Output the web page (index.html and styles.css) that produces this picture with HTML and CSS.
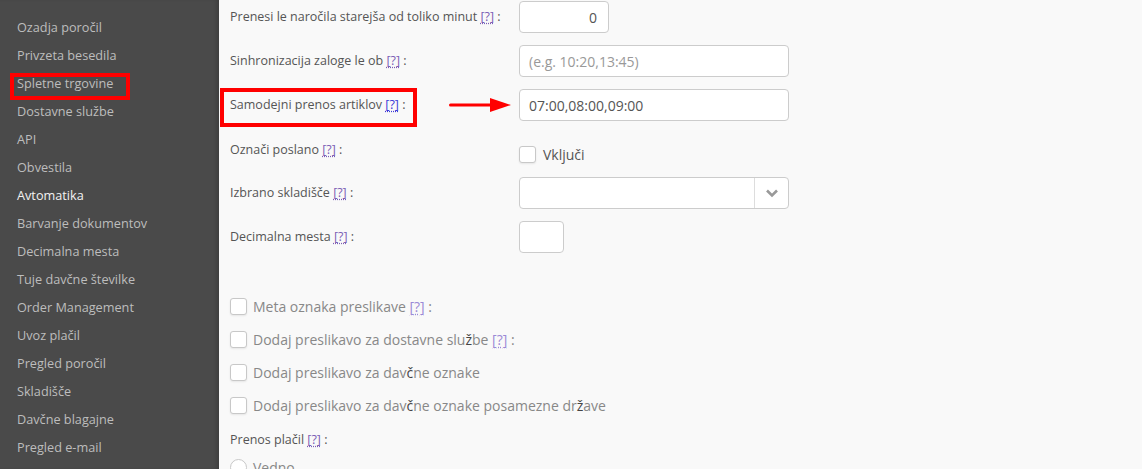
FILE: index.html
```html
<!DOCTYPE html>
<html>
<head>
<meta charset="utf-8">
<link rel="stylesheet" href="styles.css">
</head>
<body>
<div class="page">
  <nav class="sidebar">
    <ul class="menu">
      <li>Ozadja poročil</li>
      <li>Privzeta besedila</li>
      <li class="marked">Spletne trgovine<span class="mark mark-side"></span></li>
      <li>Dostavne službe</li>
      <li>API</li>
      <li>Obvestila</li>
      <li class="active">Avtomatika</li>
      <li>Barvanje dokumentov</li>
      <li>Decimalna mesta</li>
      <li>Tuje davčne številke</li>
      <li>Order Management</li>
      <li>Uvoz plačil</li>
      <li>Pregled poročil</li>
      <li>Skladišče</li>
      <li>Davčne blagajne</li>
      <li>Pregled e-mail</li>
    </ul>
  </nav>
  <main class="content">
    <div class="form">
      <div class="row">
        <div class="label">Prenesi le naročila starejša od toliko minut <a class="help">[?]</a> :</div>
        <div class="field"><input class="input input-num" type="text" value="0"></div>
      </div>
      <div class="row">
        <div class="label">Sinhronizacija zaloge le ob <a class="help">[?]</a> :</div>
        <div class="field"><input class="input input-wide" type="text" placeholder="(e.g. 10:20,13:45)"></div>
      </div>
      <div class="row">
        <div class="label marked">Samodejni prenos artiklov <a class="help help-blue">[?]</a> :<span class="mark mark-label"></span>
          <svg class="arrow" width="64" height="16" viewBox="0 0 64 16"><rect x="0" y="6.5" width="44" height="3" rx="1.5" fill="#f00"/><polygon points="41,1 62,8 41,15" fill="#f00"/></svg>
        </div>
        <div class="field"><input class="input input-wide" type="text" value="07:00,08:00,09:00"></div>
      </div>
      <div class="row">
        <div class="label label-top">Označi poslano <a class="help">[?]</a> :</div>
        <div class="field field-check"><span class="checkbox"></span><span class="check-text">Vključi</span></div>
      </div>
      <div class="row">
        <div class="label">Izbrano skladišče <a class="help">[?]</a> :</div>
        <div class="field">
          <div class="select">
            <span class="select-value"></span>
            <span class="select-arrow"><svg width="14" height="10" viewBox="0 0 14 10"><path d="M2 2.5 L7 7.5 L12 2.5" fill="none" stroke="#999" stroke-width="2.6"/></svg></span>
          </div>
        </div>
      </div>
      <div class="row">
        <div class="label">Decimalna mesta <a class="help">[?]</a> :</div>
        <div class="field"><input class="input input-small" type="text"></div>
      </div>
    </div>
    <div class="checks">
      <div class="check-row"><span class="checkbox"></span><span class="check-label">Meta oznaka preslikave <a class="help help-light">[?]</a> :</span></div>
      <div class="check-row"><span class="checkbox"></span><span class="check-label">Dodaj preslikavo za dostavne slu<b class="dark">ž</b>be <a class="help help-light">[?]</a> :</span></div>
      <div class="check-row"><span class="checkbox"></span><span class="check-label">Dodaj preslikavo za dav<b class="dark">č</b>ne oznake</span></div>
      <div class="check-row"><span class="checkbox"></span><span class="check-label">Dodaj preslikavo za dav<b class="dark">č</b>ne oznake posamezne dr<b class="dark">ž</b>ave</span></div>
    </div>
    <div class="section-label">Prenos plačil <a class="help">[?]</a> :</div>
    <div class="radio-row"><span class="radio"></span><span class="check-label">Vedno</span></div>
  </main>
</div>
</body>
</html>
```
FILE: styles.css
```css
* { box-sizing: border-box; }
html, body { margin: 0; padding: 0; height: 100%; overflow: hidden; }
body {
  font-family: "Open Sans", "Noto Sans", sans-serif;
  background: #f9f9f9;
  color: #555;
}
.page { display: flex; height: 469px; }
.sidebar {
  width: 219px;
  flex: none;
  background: #4a4a4a;
  box-shadow: inset -4px 0 4px -2px rgba(0,0,0,0.18);
}
.menu {
  list-style: none;
  margin: 0;
  padding: 13px 0 0 17px;
}
.menu li {
  height: 28px;
  line-height: 28px;
  font-size: 12.7px;
  color: #bdbdbd;
  position: relative;
  white-space: nowrap;
}
.menu li.active { color: #f2f2f2; }
.marked { position: relative; }
.mark {
  position: absolute;
  border: 4px solid #f00;
  pointer-events: none;
}
.mark-side { left: -7px; top: 4px; width: 120px; height: 27px; }
.mark-label { left: -10px; top: -1px; width: 197px; height: 39px; }
.arrow { position: absolute; left: 219px; top: 8px; }

.content {
  flex: 1;
  padding: 1px 0 0 11px;
  position: relative;
}
.form { display: flex; flex-direction: column; gap: 12px; }
.row { display: flex; height: 32px; }
.label {
  width: 289px;
  flex: none;
  font-size: 12.5px;
  line-height: 32px;
  color: #555;
  white-space: nowrap;
}
.label-top { line-height: 18px; padding-top: 8px; }
.help {
  color: #7b5fb5;
  text-decoration: underline dotted;
  text-underline-offset: 2px;
}
.help-blue { color: #3a3ad8; }
.help-light { color: #9b8ad6; }
.field { display: flex; align-items: center; }
.input {
  height: 32px;
  border: 1px solid #ccc;
  border-radius: 4px;
  background: #fff;
  font-family: "Open Sans", "Noto Sans", sans-serif;
  font-size: 14px;
  color: #555;
  padding: 0 9px;
  outline: none;
}
.input::placeholder { color: #999; }
.input-num { width: 90px; text-align: right; padding-right: 11px; }
.input-wide { width: 270px; }
.input-small { width: 45px; }
.field-check { align-items: flex-start; padding-top: 13px; gap: 7px; }
.checkbox {
  display: inline-block;
  width: 17px;
  height: 17px;
  flex: none;
  border: 1px solid #c8c8c8;
  border-radius: 3px;
  background: #fff;
  box-shadow: 0 1px 2px rgba(0,0,0,0.08);
}
.check-text { font-size: 14px; line-height: 17px; color: #555; }
.select {
  width: 270px;
  height: 32px;
  border: 1px solid #ccc;
  border-radius: 4px;
  background: #fff;
  display: flex;
}
.select-value { flex: 1; }
.select-arrow {
  width: 34px;
  border-left: 1px solid #ddd;
  display: flex;
  align-items: center;
  justify-content: center;
}
.checks {
  margin-top: 45px;
  display: flex;
  flex-direction: column;
  gap: 16px;
}
.check-row { display: flex; align-items: center; gap: 6px; height: 17px; }
.check-label { font-size: 14px; color: #888; white-space: nowrap; }
.dark { font-weight: normal; color: #444; }
.section-label { font-size: 12.5px; color: #555; margin-top: 17px; line-height: 18px; }
.radio-row { display: flex; align-items: center; gap: 6px; margin-top: 9px; }
.radio {
  width: 17px; height: 17px;
  border: 1px solid #c8c8c8;
  border-radius: 50%;
  background: #fff;
}
```
